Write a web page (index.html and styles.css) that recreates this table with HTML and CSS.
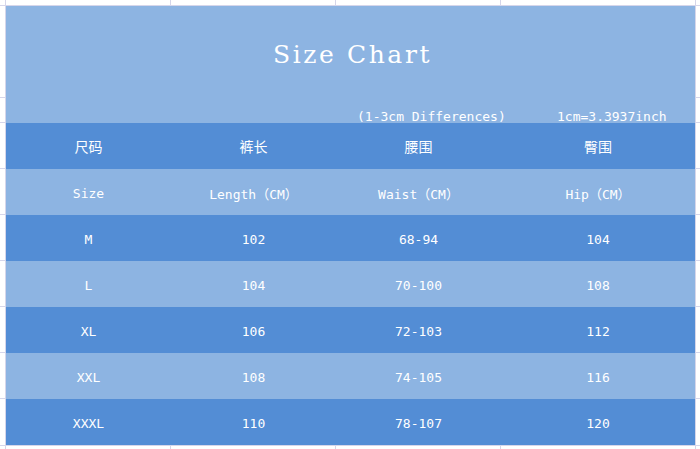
FILE: index.html
```html
<!DOCTYPE html>
<html lang="zh">
<head>
<meta charset="utf-8">
<title>Size Chart</title>
<link rel="stylesheet" href="styles.css">
</head>
<body>
<div class="sheet">
  <div class="title-block">
    <h1 class="title">Size Chart</h1>
    <div class="notes">
      <span class="note note-diff">(1-3cm Differences)</span>
      <span class="note note-unit">1cm=3.3937inch</span>
    </div>
  </div>
  <div class="row dark cjk">
    <div class="cell">尺码</div><div class="cell">裤长</div><div class="cell">腰围</div><div class="cell">臀围</div>
  </div>
  <div class="row light">
    <div class="cell">Size</div><div class="cell">Length（CM）</div><div class="cell">Waist（CM）</div><div class="cell">Hip（CM）</div>
  </div>
  <div class="row dark">
    <div class="cell">M</div><div class="cell">102</div><div class="cell">68-94</div><div class="cell">104</div>
  </div>
  <div class="row light">
    <div class="cell">L</div><div class="cell">104</div><div class="cell">70-100</div><div class="cell">108</div>
  </div>
  <div class="row dark">
    <div class="cell">XL</div><div class="cell">106</div><div class="cell">72-103</div><div class="cell">112</div>
  </div>
  <div class="row light">
    <div class="cell">XXL</div><div class="cell">108</div><div class="cell">74-105</div><div class="cell">116</div>
  </div>
  <div class="row dark">
    <div class="cell">XXXL</div><div class="cell">110</div><div class="cell">78-107</div><div class="cell">120</div>
  </div>
</div>
</body>
</html>
```

FILE: styles.css
```css
html, body {
  margin: 0;
  padding: 0;
}

body {
  --grid: #d6d6ea;
  width: 700px;
  height: 449px;
  overflow: hidden;
  padding: 6px 0 0 6px;
  box-sizing: border-box;
  background-color: #ffffff;
  background-repeat: no-repeat;
  background-image:
    linear-gradient(var(--grid), var(--grid)),
    linear-gradient(var(--grid), var(--grid)),
    linear-gradient(var(--grid), var(--grid)),
    linear-gradient(var(--grid), var(--grid)),
    linear-gradient(var(--grid), var(--grid)),
    linear-gradient(var(--grid), var(--grid)),
    linear-gradient(var(--grid), var(--grid)),
    linear-gradient(var(--grid), var(--grid)),
    linear-gradient(var(--grid), var(--grid)),
    linear-gradient(var(--grid), var(--grid)),
    linear-gradient(var(--grid), var(--grid)),
    linear-gradient(var(--grid), var(--grid)),
    linear-gradient(var(--grid), var(--grid)),
    linear-gradient(var(--grid), var(--grid)),
    linear-gradient(var(--grid), var(--grid));
  background-size:
    1px 449px, 1px 449px, 1px 449px, 1px 449px, 1px 449px,
    700px 1px, 700px 1px, 700px 1px, 700px 1px, 700px 1px,
    700px 1px, 700px 1px, 700px 1px, 700px 1px, 700px 1px;
  background-position:
    5px 0, 170px 0, 335px 0, 500px 0, 695px 0,
    0 5px, 0 97px, 0 122px, 0 168px, 0 214px,
    0 260px, 0 306px, 0 352px, 0 398px, 0 445px;
  font-family: "DejaVu Sans Mono", "Noto Sans CJK SC", monospace;
  color: #ffffff;
}

.sheet {
  width: 689px;
  display: flex;
  flex-direction: column;
}

.title-block {
  height: 117px;
  background: #8db4e2;
  display: flex;
  flex-direction: column;
}

.title {
  flex-shrink: 0;
  margin: 0;
  padding-top: 34px;
  padding-left: 4px;
  height: 70px;
  box-sizing: border-box;
  text-align: center;
  font-family: "DejaVu Serif", serif;
  font-weight: normal;
  font-size: 25px;
  letter-spacing: 2.6px;
  line-height: 30px;
}

.notes {
  display: grid;
  grid-template-columns: 165px 165px 165px 194px;
  margin-top: auto;
  font-size: 13px;
  line-height: 12px;
}

.note {
  white-space: nowrap;
}

.note-diff {
  grid-column: 3;
  padding-left: 21px;
}

.note-unit {
  grid-column: 4;
  padding-left: 56px;
}

.row {
  display: grid;
  grid-template-columns: 165px 165px 165px 194px;
  height: 46px;
  font-size: 13px;
}

.row.dark {
  background: #538dd5;
}

.row.light {
  background: #8db4e2;
}

.row.cjk {
  font-family: "Noto Sans CJK SC", sans-serif;
  font-size: 14px;
}

.cell {
  display: flex;
  align-items: center;
  justify-content: center;
  white-space: nowrap;
  padding-top: 2px;
}

.row.cjk .cell {
  padding-top: 0;
}
```
